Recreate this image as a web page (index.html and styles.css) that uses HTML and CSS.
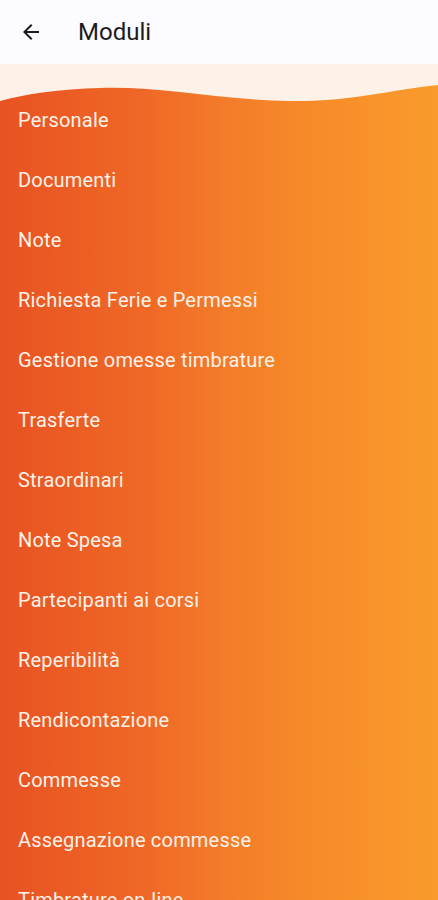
FILE: index.html
```html
<!DOCTYPE html>
<html lang="it">
<head>
  <meta charset="UTF-8" />
  <meta name="viewport" content="width=device-width, initial-scale=1.0" />
  <title>Moduli</title>
  <link rel="stylesheet" href="styles.css">
</head>
<body>

<div id="app-bar">
  <div id="back-button">
    <svg viewBox="0 0 24 24" width="24" height="24">
      <path d="M20 11H7.83l5.59-5.59L12 4l-8 8 8 8 1.41-1.41L7.83 13H20v-2z" fill="#1c1b1f"/>
    </svg>
  </div>
  <h1 id="page-title">Moduli</h1>
</div>

<div id="content">
  <svg id="wave" viewBox="0 0 438 40" preserveAspectRatio="none">
    <path d="M0 0 H438 V21 C390 26 350 38 290 37 C220 36 160 22 100 24 C60 25 25 30 0 37 Z" fill="#fdf1e8"/>
  </svg>

  <ul id="module-list">
    <li class="module-item">Personale</li>
    <li class="module-item">Documenti</li>
    <li class="module-item">Note</li>
    <li class="module-item">Richiesta Ferie e Permessi</li>
    <li class="module-item">Gestione omesse timbrature</li>
    <li class="module-item">Trasferte</li>
    <li class="module-item">Straordinari</li>
    <li class="module-item">Note Spesa</li>
    <li class="module-item">Partecipanti ai corsi</li>
    <li class="module-item">Reperibilità</li>
    <li class="module-item">Rendicontazione</li>
    <li class="module-item">Commesse</li>
    <li class="module-item">Assegnazione commesse</li>
    <li class="module-item">Timbrature on-line</li>
  </ul>
</div>

</body>
</html>
```

FILE: styles.css
```css
    body {
      font-family: Roboto, 'Noto Sans', sans-serif;
      margin: 0;
      padding: 0;
      background-color: #fcfbff;
      color: #1c1b1f;
      overflow: hidden;
    }

    #app-bar {
      height: 64px;
      display: flex;
      align-items: center;
      padding: 0 16px 0 19px;
      background-color: #fcfbff;
    }

    #back-button {
      width: 24px;
      height: 24px;
      display: flex;
    }

    #page-title {
      font-size: 24px;
      font-weight: 400;
      margin: 0 0 0 35px;
    }

    #content {
      position: relative;
      min-height: 836px;
      background: linear-gradient(90deg, #e85222 0%, #ef6826 33%, #f37a29 50%, #f68829 67%, #f9962b 91%, #fa9b2b 100%);
    }

    #wave {
      position: absolute;
      top: 0;
      left: 0;
      width: 100%;
      height: 40px;
      display: block;
    }

    #module-list {
      list-style: none;
      margin: 0;
      padding: 26px 0 0;
    }

    .module-item {
      height: 60px;
      display: flex;
      align-items: center;
      padding-left: 18px;
      font-size: 20px;
      letter-spacing: 0.2px;
      color: #fdf1e8;
    }
```
